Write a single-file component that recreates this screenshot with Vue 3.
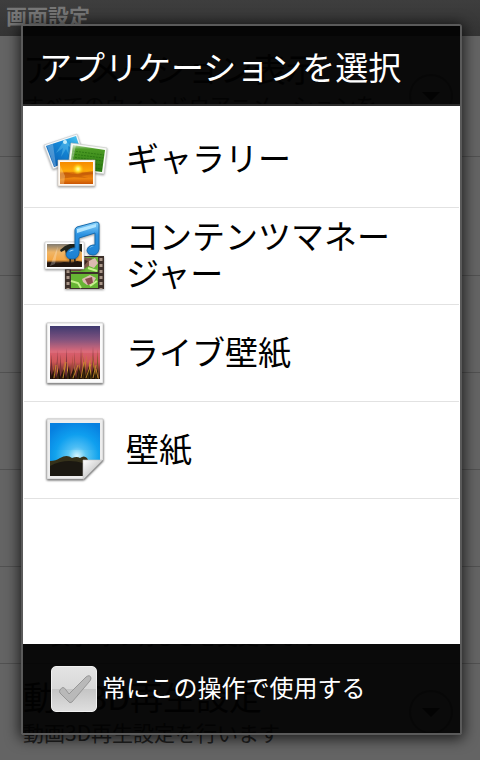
<script setup>
import { ref } from 'vue'

const always = ref(false)

const settings = [
    { title: 'アニメーション表示', text: 'すべてのウィンドウアニメーションを表示します', tall: true, arrow: true },
    { title: '画面の明るさ', text: '画面の明るさを調整します', tall: true },
    { title: '画面の自動回転', text: '' },
    { title: '壁紙', text: '' },
    { title: 'バックライト消灯', text: '' },
    { title: '3D表示設定', text: '3D表示時の明るさを変更します' },
    { title: '動画3D再生設定', text: '動画3D再生設定を行います', arrow: true },
]

const apps = [
    { id: 'gallery', name: 'ギャラリー' },
    { id: 'contents', name: 'コンテンツマネージャー' },
    { id: 'live', name: 'ライブ壁紙' },
    { id: 'wallpaper', name: '壁紙' },
]

// blades of grass: x of the foot, x of the tip, y of the tip, colour
const grass = [
    [8, 9, 33, '#6b2c35'], [11, 10, 39, '#b95c37'], [13, 15, 29, '#873b43'], [15, 14, 42, '#d78a3c'],
    [18, 17, 33, '#7b3339'], [20, 22, 36, '#c97838'], [23, 24, 27, '#6f303a'], [25, 24, 40, '#d99a3a'],
    [28, 30, 34, '#a34d36'], [30, 33, 39, '#d9a13d'], [33, 31, 30, '#8f4340'], [35, 38, 37, '#cb8a2d'],
    [38, 38, 26, '#6d2c2c'], [40, 44, 33, '#c78a2c'], [43, 39, 30, '#a3652c'], [45, 48, 35, '#bd9127'],
    [48, 46, 38, '#d4a92c'], [50, 50, 25, '#63302c'], [53, 49, 34, '#b98c1f'], [55, 54, 28, '#7d5425'],
]
</script>

<template>
    <div class="screen">
        <header class="screen-title">画面設定</header>
        <ul class="settings">
            <li v-for="item in settings" :key="item.title" :class="{ tall: item.tall }">
                <div class="setting-text">
                    <h3>{{ item.title }}</h3>
                    <p>{{ item.text }}</p>
                </div>
                <svg v-if="item.arrow" class="arrow" viewBox="0 0 44 44">
                    <circle cx="22" cy="22" r="21" fill="none" stroke="#484848" stroke-width="2" />
                    <path d="M13 18h18l-9 9z" fill="#222" />
                </svg>
            </li>
        </ul>

        <div class="dialog" role="dialog" aria-labelledby="dialog-title">
            <h2 id="dialog-title">アプリケーションを選択</h2>
            <div class="app-list">
                <button v-for="app in apps" :key="app.id" class="app" type="button">
                    <svg v-if="app.id === 'gallery'" class="icon" viewBox="0 0 64 64">
                        <defs>
                            <linearGradient id="g-blue" x1="0" y1="1" x2="1" y2="0">
                                <stop offset="0" stop-color="#0757ae" />
                                <stop offset=".6" stop-color="#168bd9" />
                                <stop offset="1" stop-color="#5ad3f4" />
                            </linearGradient>
                            <linearGradient id="g-green" x1="0" y1="0" x2="0" y2="1">
                                <stop offset="0" stop-color="#b4d9a5" />
                                <stop offset=".15" stop-color="#4d9c25" />
                                <stop offset="1" stop-color="#28780f" />
                            </linearGradient>
                            <linearGradient id="g-orange" x1="0" y1="0" x2="0" y2="1">
                                <stop offset="0" stop-color="#f58a00" />
                                <stop offset=".42" stop-color="#ffab09" />
                                <stop offset=".5" stop-color="#d56a08" />
                                <stop offset=".75" stop-color="#ee850e" />
                                <stop offset="1" stop-color="#c95405" />
                            </linearGradient>
                            <radialGradient id="g-sun">
                                <stop offset="0" stop-color="#fffcc0" />
                                <stop offset=".35" stop-color="#ffec3e" />
                                <stop offset="1" stop-color="#ffb400" stop-opacity="0" />
                            </radialGradient>
                        </defs>
                        <g class="photo">
                            <path d="M1 18 34 7l8 24L10 42z" fill="#f5f7f8" stroke="#c5cbd0" stroke-width=".6" />
                            <path d="M3 19 33 9l7 21-29 10z" fill="url(#g-blue)" />
                            <path d="m22 12-9 14 7-5-2 9 5-8 3 6-1-9 6 3-6-6z" fill="#8fe0fa" opacity=".3" />
                            <path d="m4 19 6-2 3 22-2 0z" fill="#fff" opacity=".25" />
                            <circle cx="22" cy="15" r="2" fill="#e4fcff" opacity=".8" />
                        </g>
                        <g class="photo">
                            <path d="m28 16 36 5-3 26-36-5z" fill="#f8faf6" stroke="#c4c8c2" stroke-width=".6" />
                            <path d="m30 18 32 5-3 22-32-4z" fill="url(#g-green)" />
                            <path d="m30 24 31 4M29 27l31 4M29 30l31 4M28 34l31 4M28 38l31 4" stroke="#175f08" stroke-width="1" stroke-dasharray="2 1" opacity=".5" />
                            <path d="m30 18 3 0-3 15-2 0z" fill="#fff" opacity=".35" />
                        </g>
                        <g class="photo">
                            <path d="M15 33h37v26H15z" fill="#fffaf3" stroke="#cbbfb6" stroke-width=".6" />
                            <path d="M17 35h33v22H17z" fill="url(#g-orange)" />
                            <circle cx="35" cy="42" r="6" fill="url(#g-sun)" />
                            <path d="M17 47q6-3 12 0l6 0q8-2 15-3v3l-12 2 7 2-14-1-14 2z" fill="#b54f08" opacity=".5" />
                            <path d="m17 38 5 11-1 8h-4z" fill="#ffe0a4" opacity=".35" />
                        </g>
                    </svg>

                    <svg v-else-if="app.id === 'contents'" class="icon" viewBox="0 0 64 64">
                        <defs>
                            <linearGradient id="c-sky" x1="0" y1="0" x2="0" y2="1">
                                <stop offset="0" stop-color="#817c73" />
                                <stop offset=".35" stop-color="#efb567" />
                                <stop offset=".7" stop-color="#f5a642" />
                                <stop offset=".82" stop-color="#302019" />
                                <stop offset="1" stop-color="#19100c" />
                            </linearGradient>
                            <linearGradient id="c-note" x1="0" y1="0" x2="0" y2="1">
                                <stop offset="0" stop-color="#8bd4fb" />
                                <stop offset=".35" stop-color="#2a91e1" />
                                <stop offset="1" stop-color="#1b80d1" />
                            </linearGradient>
                        </defs>
                        <g class="photo">
                            <path d="M22 32h39v33H22z" fill="#3d302a" />
                            <path d="M28 33h27v15H28zM28 50h27v14H28z" fill="#67b534" />
                            <path d="m28 36 8-3 13 1-3 8-9 5h-9z" fill="#805b4b" />
                            <path d="m29 40 10-5 6 2-6 7-9 1z" fill="#3e251f" />
                            <path d="m46 37 6-3 3 5-4 5-5-2zM39 55l8-4 6 3-4 7-5 0-4-3z" fill="#dcbab1" />
                            <path d="m42 55 7-2 1 6-5 2z" fill="#894e4b" />
                            <path d="m28 57 7 2 3 5M45 44l9 3M47 62l7-5" stroke="#c6f18b" stroke-width="2" fill="none" />
                            <path d="M25 34v31M58 34v31" stroke="#aa9789" stroke-width="3" stroke-dasharray="3 3" />
                        </g>
                        <g class="photo">
                            <path d="M2 18h39v27H2z" fill="#fff" stroke="#c6c6c6" stroke-width=".6" />
                            <path d="M4 20h35v23H4z" fill="url(#c-sky)" />
                            <path d="M4 39q5-2 10 1l7-2 8 1 5-2 5 1v5H4z" fill="#20150f" />
                            <path d="M27 39q1-8-3-13M32 38l-1-14" stroke="#171817" stroke-width="1.400" fill="none" />
                            <path d="m17 26 5-4 5-2h12v8l-4-2-3 3-2-4-4 1-3 5-1-5-4 2z" fill="#20231b" />
                            <path d="M7 42 15 22l-3 18" fill="#fff" opacity=".25" />
                        </g>
                        <g class="photo" fill="url(#c-note)" stroke="#176caf" stroke-width="1">
                            <path d="M32 6q0-2 2-3l19-5q3 0 3 2v25q-1 6-6 6-5 0-6-4 0-5 6-6l2 0V9L36 14v15q-1 6-7 6-5 0-6-4 1-6 7-7h2z" />
                            <path d="m34 5 19-5v3l-19 6zM26 28q2-3 5-2M46 24q2-2 5-2" fill="#b2e5ff" stroke="none" />
                        </g>
                    </svg>

                    <svg v-else-if="app.id === 'live'" class="icon" viewBox="0 0 64 64">
                        <defs>
                            <linearGradient id="l-sky" x1="0" y1="0" x2="0" y2="1">
                                <stop offset="0" stop-color="#302b65" />
                                <stop offset=".25" stop-color="#754675" />
                                <stop offset=".48" stop-color="#d95f70" />
                                <stop offset=".68" stop-color="#cf5758" />
                                <stop offset="1" stop-color="#180b04" />
                            </linearGradient>
                        </defs>
                        <path class="sheet" d="M4 2h56v60H4z" fill="#fbfbfb" stroke="#c3c3c3" stroke-width=".6" />
                        <path d="M7 5h50v53H7z" fill="url(#l-sky)" />
                        <path d="M7 5h50v27H7z" fill="#fff" opacity=".07" />
                        <path v-for="b in grass" :key="b[0]" :d="`M${b[0] - 1} 58L${b[1]} ${b[2]}L${b[0] + 1} 58z`" :fill="b[3]" />
                        <path d="m7 58V49l2 6 2-7 2 9 3-10 1 9 4-8 2 9 3-12 1 11 4-9 2 10 3-11 2 9 3-12 2 12 3-10 2 10 3-9 2 8 2-7v11z" fill="#160d05" opacity=".8" />
                        <path d="m11 57 2-13M20 57l3-16M30 57l5-13M38 57l3-16M43 57l5-14M50 57l3-13M55 57l-2-9" stroke="#d5982c" stroke-width=".8" />
                    </svg>

                    <svg v-else class="icon" viewBox="0 0 64 64">
                        <defs>
                            <radialGradient id="w-sky" gradientUnits="userSpaceOnUse" cx="34" cy="38" r="36">
                                <stop offset="0" stop-color="#d6f6ff" />
                                <stop offset=".25" stop-color="#5cc7f3" />
                                <stop offset=".6" stop-color="#12a3ed" />
                                <stop offset="1" stop-color="#087edb" />
                            </radialGradient>
                            <linearGradient id="w-fold" x1="0" y1="0" x2="1" y2="1">
                                <stop offset="0" stop-color="#fff" />
                                <stop offset=".5" stop-color="#d5d5d5" />
                            </linearGradient>
                        </defs>
                        <path class="sheet" d="M4 1h56v41L41 61H4z" fill="#ededed" stroke="#bcbcbc" stroke-width=".6" />
                        <path d="M7 5h50v37H40v16H7z" fill="url(#w-sky)" />
                        <path d="M7 5h50v27H7z" fill="#008cff" opacity=".15" />
                        <path d="M7 43q6 0 10-3 7-4 12 0 5-2 8 0 4-3 7 0l1 2h-5v16H7z" fill="#35311a" />
                        <path d="M7 48q15-8 33-3v13H7z" fill="#1b1811" />
                        <path d="M40 42h19L41 61h-1z" fill="url(#w-fold)" stroke="#c5c5c5" stroke-width=".6" />
                        <path d="M60 42 41 61" stroke="#a2a2a2" stroke-width="1" />
                    </svg>
                    <span class="app-name">{{ app.name }}</span>
                </button>
            </div>
            <div class="dialog-footer">
                <label class="always">
                    <span class="box">
                        <input v-model="always" type="checkbox">
                        <svg class="tick" :class="{ on: always }" viewBox="0 0 46 46">
                            <path d="M9 24q3-5 6 0l3 4L35 11q4-3 5 1 0 2-2 4L21 36q-2 2-4-1L9 27q-1-2 0-3z" />
                        </svg>
                    </span>
                    <span class="always-text">常にこの操作で使用する</span>
                </label>
            </div>
        </div>
    </div>
</template>

<style>
body {
    background: #646464;
}
</style>

<style scoped>
.screen {
    position: relative;
    min-height: 100vh;
    overflow: hidden;
    background: #646464;
    color: #202020;
    font-family: "Noto Sans CJK JP", sans-serif;
}
.screen-title {
    height: 36px;
    box-sizing: border-box;
    padding-left: 6px;
    background: linear-gradient(#3e3e3e, #343434);
    color: #777;
    font-size: 21px;
    font-weight: bold;
    line-height: 30px;
}
.settings {
    margin: 0;
    padding: 0;
    list-style: none;
}
.settings li {
    display: flex;
    justify-content: space-between;
    align-items: center;
    height: 96px;
    padding: 0 27px 0 23px;
    border-bottom: 1px solid #515151;
}
.settings li.tall {
    height: 118px;
}
.settings li.tall:first-child {
    height: 120px;
}
.settings li:last-child {
    border-bottom: 0;
}
.setting-text {
    align-self: flex-start;
    padding-top: 12px;
}
.settings h3 {
    margin: 0;
    color: #111;
    font-size: 33px;
    font-weight: normal;
    line-height: 40px;
}
.settings p {
    max-width: 360px;
    margin: 2px 0 0;
    font-size: 21px;
    line-height: 28px;
}
.arrow {
    flex: none;
    width: 44px;
    height: 44px;
}
.dialog {
    position: absolute;
    inset: 24px 18px 25px 21px;
    display: flex;
    flex-direction: column;
    border: 2px solid #5a5a5a;
    border-radius: 3px;
    box-shadow: 0 2px 14px 2px rgba(0, 0, 0, 0.7);
}
.dialog h2 {
    flex: none;
    height: 80px;
    box-sizing: border-box;
    margin: 0;
    padding-left: 16px;
    border-bottom: 2px solid #2c2c2c;
    background: rgba(0, 0, 0, 0.9);
    color: #fff;
    font-size: 33px;
    font-weight: normal;
    line-height: 80px;
}
.app-list {
    flex: 1;
    padding: 5px 1px 0;
    background: #fff;
}
.app {
    display: flex;
    align-items: center;
    gap: 19px;
    width: 100%;
    height: 97px;
    padding: 0 60px 0 19px;
    border: 0;
    border-bottom: 1px solid #e2e2e2;
    background: none;
    color: #000;
    font-family: inherit;
    font-size: 33px;
    line-height: 37px;
    text-align: left;
}
.app-name,
.always-text {
    padding-bottom: 4px;
}
.icon {
    flex: none;
    width: 64px;
    height: 64px;
    overflow: visible;
}
.photo {
    filter: drop-shadow(0 1px 1px rgba(0, 0, 0, 0.4));
}
.sheet {
    filter: drop-shadow(0 1px 1px rgba(0, 0, 0, 0.7));
}
.dialog-footer {
    display: flex;
    align-items: center;
    flex: none;
    height: 89px;
    padding-left: 28px;
    background: rgba(0, 0, 0, 0.9);
    color: #fff;
    font-size: 24px;
}
.always {
    display: flex;
    align-items: center;
    gap: 5px;
}
.box {
    display: grid;
    width: 46px;
    height: 46px;
}
.box > * {
    grid-area: 1 / 1;
}
.box input {
    width: 46px;
    height: 46px;
    margin: 0;
    appearance: none;
    border: 1px solid #f0f0f0;
    border-radius: 5px;
    background: linear-gradient(#e3e3e3, #d8d8d8 50%, #c5c5c5 51%, #dedede);
}
.tick {
    width: 46px;
    height: 46px;
    fill: #b9b9b9;
    stroke: #979797;
    stroke-width: 1;
    pointer-events: none;
}
.tick.on {
    fill: #55b82c;
    stroke: #3a8a1b;
}
</style>
